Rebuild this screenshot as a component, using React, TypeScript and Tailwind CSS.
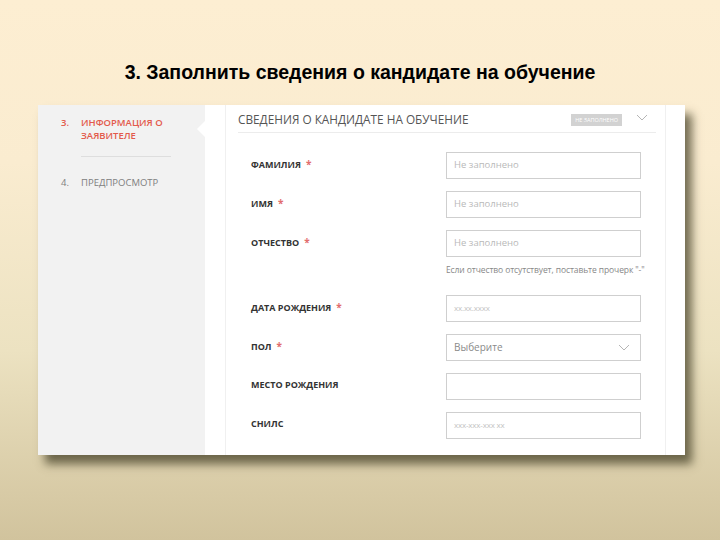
import React from "react";

type Field = {
  label: string;
  required?: boolean;
  placeholder?: string;
  hint?: string;
  select?: boolean;
};

const FIELDS: Field[] = [
  { label: "Фамилия", required: true, placeholder: "Не заполнено" },
  { label: "Имя", required: true, placeholder: "Не заполнено" },
  {
    label: "Отчество",
    required: true,
    placeholder: "Не заполнено",
    hint: 'Если отчество отсутствует, поставьте прочерк "-"',
  },
  { label: "Дата рождения", required: true, placeholder: "xx.xx.xxxx" },
  { label: "Пол", required: true, placeholder: "Выберите", select: true },
  { label: "Место рождения" },
  { label: "СНИЛС", placeholder: "xxx-xxx-xxx xx" },
];

function Chevron({ className }: { className?: string }) {
  return (
    <svg className={className} width="12" height="7" viewBox="0 0 12 7" fill="none">
      <path d="M1 1l5 5 5-5" stroke="#b5b5b5" strokeWidth="1" />
    </svg>
  );
}

function FormRow({ field }: { field: Field }) {
  const small = field.placeholder?.startsWith("xx");
  return (
    <div className="flex items-start">
      <div className="w-[195px] pt-[5px] text-[9px] font-bold uppercase text-[#333]">
        {field.label}
        {field.required ? <span className="ml-[5px] text-[10px] text-[#e26d6d]">*</span> : null}
      </div>
      <div className="flex flex-col">
        <div className="flex h-[27px] w-[195px] items-center justify-between border border-[#cfcfcf] bg-white pl-[7px] pr-[10px]">
          <span
            className={
              field.select
                ? "text-[10px] text-[#8a8a8a]"
                : small
                ? "text-[8px] tracking-tight text-[#c4c4c4]"
                : "text-[9.5px] text-[#b9b9b9]"
            }
          >
            {field.placeholder}
          </span>
          {field.select ? <Chevron /> : null}
        </div>
        {field.hint ? (
          <div className="mt-[7px] mb-[6px] text-[8.5px] tracking-[-0.1px] text-[#888]">{field.hint}</div>
        ) : null}
      </div>
    </div>
  );
}

export default function App() {
  return (
    <div className="flex h-[540px] w-[720px] flex-col items-center bg-[linear-gradient(to_bottom,#fdeed2_0%,#faecd0_30%,#ece2c1_65%,#d1c39d_100%)] font-['Open_Sans',sans-serif]">
      <h1 className="mt-[59px] text-[19.5px] leading-[27px] font-bold text-black font-['Liberation_Sans',Arial,sans-serif]">
        3. Заполнить сведения о кандидате на обучение
      </h1>

      <div className="mt-[19px] ml-[3px] flex h-[350px] w-[647px] shadow-[7px_9px_9px_rgba(70,66,40,0.75)]">
        {/* sidebar */}
        <div className="relative w-[167px] bg-[#f2f2f2] pt-[11px]">
          <div className="flex text-[9.5px] font-semibold uppercase leading-[13px] text-[#e35a4c]">
            <span className="w-[43px] pl-[23px]">3.</span>
            <span className="w-[100px]">Информация о заявителе</span>
          </div>
          <div className="mt-[14px] ml-[43px] h-px w-[90px] bg-[#dedede]" />
          <div className="mt-[19px] flex text-[9.5px] uppercase leading-[13px] text-[#808080]">
            <span className="w-[43px] pl-[23px]">4.</span>
            <span>Предпросмотр</span>
          </div>
          <div className="absolute right-0 top-[16px] h-0 w-0 border-y-[8px] border-r-[8px] border-y-transparent border-r-white" />
        </div>

        {/* content */}
        <div className="flex-1 bg-white pl-[20px] pr-[19px]">
          <div className="h-full border-x border-[#f0f0f0] pl-[12px] pr-[9px]">
            <div className="flex h-[28px] items-end justify-between border-b border-[#ececec] pb-[5px]">
              <span className="text-[11.8px] leading-[16px] text-[#555]">СВЕДЕНИЯ О КАНДИДАТЕ НА ОБУЧЕНИЕ</span>
              <div className="mr-[8px] flex items-center gap-[14px] pb-[1px]">
                <span className="bg-[#d2d2d2] px-[4px] text-[5.5px] leading-[12px] text-white">НЕ ЗАПОЛНЕНО</span>
                <Chevron className="mb-[5px]" />
              </div>
            </div>
            <div className="flex flex-col gap-[12px] pl-[13px] pt-[19px]">
              {FIELDS.map((f) => (
                <FormRow key={f.label} field={f} />
              ))}
            </div>
          </div>
        </div>
      </div>
    </div>
  );
}
